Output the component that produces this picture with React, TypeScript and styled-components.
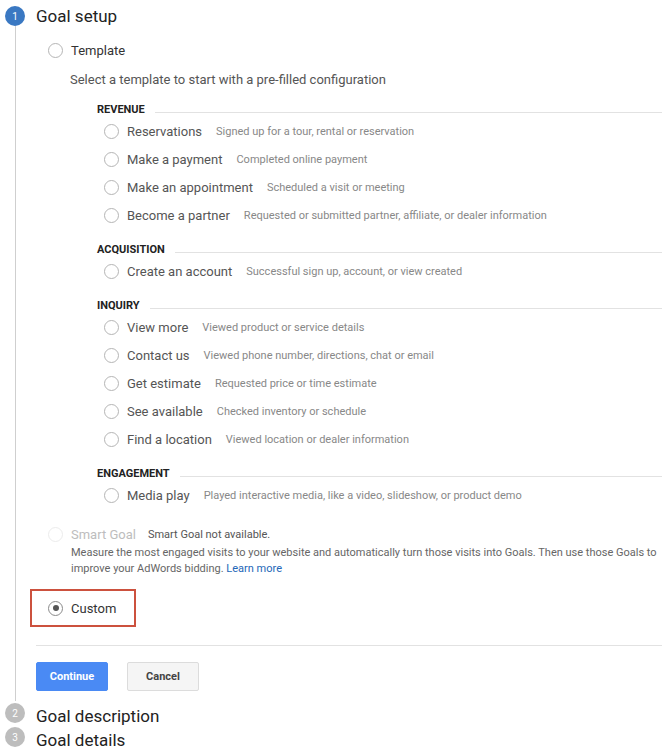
import React from "react";
import styled, { createGlobalStyle } from "styled-components";

const GlobalStyle = createGlobalStyle`
  html, body {
    margin: 0;
    padding: 0;
    background: #ffffff;
  }
  body {
    font-family: Roboto, "Noto Sans", "Liberation Sans", Arial, sans-serif;
    color: #333;
    overflow: hidden;
  }
`;

const Page = styled.div`
  width: 662px;
`;

const Step = styled.section`
  display: grid;
  grid-template-columns: 36px 1fr;
`;

const Rail = styled.div`
  width: 30px;
  display: flex;
  flex-direction: column;
  align-items: center;
`;

const StepBadge = styled.div<{ $active?: boolean; $top?: number }>`
  width: 20px;
  height: 20px;
  border-radius: 50%;
  flex-shrink: 0;
  margin-top: ${(p) => p.$top ?? 0}px;
  background: ${(p) => (p.$active ? "#3a78c2" : "#bdbdbd")};
  color: #fff;
  font-size: 10px;
  display: flex;
  align-items: center;
  justify-content: center;
`;

const RailLine = styled.div`
  flex: 1;
  width: 1px;
  background: #cfcfcf;
`;

const StepBody = styled.div`
  padding-bottom: 10px;
`;

const Heading = styled.h2<{ $h: number; $shift?: number }>`
  margin: 0;
  font-size: 17px;
  font-weight: 400;
  color: #222;
  box-sizing: border-box;
  height: ${(p) => p.$h}px;
  line-height: ${(p) => p.$h}px;
  padding-top: ${(p) => p.$shift ?? 0}px;
`;

const CollapsedStep = styled(Step)`
  height: 24px;
  align-items: center;
`;

const Radio = styled.span<{ $checked?: boolean; $disabled?: boolean }>`
  box-sizing: border-box;
  width: 15px;
  height: 15px;
  border-radius: 50%;
  flex-shrink: 0;
  border: 1px solid
    ${(p) => (p.$disabled ? "#ececec" : p.$checked ? "#8a8a8a" : "#b5b5b5")};
  display: flex;
  align-items: center;
  justify-content: center;
  &::after {
    content: "";
    width: 6px;
    height: 6px;
    border-radius: 50%;
    background: #555;
    display: ${(p) => (p.$checked ? "block" : "none")};
  }
`;

const OptionRow = styled.div<{ $h: number; $mt: number }>`
  display: flex;
  align-items: center;
  gap: 8px;
  height: ${(p) => p.$h}px;
  margin-top: ${(p) => p.$mt}px;
  padding-left: 12px;
`;

const OptionLabel = styled.span<{ $muted?: boolean }>`
  font-size: 13px;
  color: ${(p) => (p.$muted ? "#bdbdbd" : "#333")};
`;

const SmallNote = styled.span`
  font-size: 11px;
  color: #555;
  margin-left: 4px;
`;

const Hint = styled.p`
  margin: 6px 0 0 0;
  padding-left: 34px;
  font-size: 13px;
  line-height: 20px;
  color: #555;
`;

const Categories = styled.div`
  margin-top: 11px;
  padding-left: 61px;
  display: flex;
  flex-direction: column;
  gap: 12px;
`;

const CategoryHeader = styled.div`
  display: flex;
  align-items: center;
  gap: 10px;
  height: 16px;
  font-size: 11px;
  font-weight: 700;
  color: #222;
  text-transform: uppercase;
  &::after {
    content: "";
    flex: 1;
    height: 1px;
    background: #e2e2e2;
    align-self: flex-end;
    margin-bottom: 4px;
  }
`;

const TemplateRow = styled.div`
  display: flex;
  align-items: center;
  height: 28px;
  padding-left: 7px;
`;

const TemplateLabel = styled.span`
  margin-left: 8px;
  font-size: 13px;
  color: #555;
`;

const TemplateDesc = styled.span`
  margin-left: 14px;
  font-size: 11px;
  color: #888;
`;

const SmartDesc = styled.p`
  margin: 0;
  padding-left: 35px;
  font-size: 11px;
  line-height: 16px;
  color: #666;
  white-space: nowrap;
`;

const LearnMore = styled.a`
  color: #2467b8;
  text-decoration: none;
`;

const CustomBox = styled.div`
  box-sizing: border-box;
  display: flex;
  align-items: center;
  gap: 8px;
  width: fit-content;
  height: 38px;
  margin-top: 12px;
  margin-left: -6px;
  padding: 0 18px 0 16px;
  border: 2px solid #cc513e;
`;

const Divider = styled.hr`
  margin: 18px 0 0 0;
  border: none;
  height: 1px;
  background: #e2e2e2;
`;

const Actions = styled.div`
  display: flex;
  gap: 19px;
  margin-top: 16px;
`;

const Button = styled.button<{ $primary?: boolean }>`
  box-sizing: border-box;
  width: 72px;
  height: 29px;
  border-radius: 2px;
  font-family: inherit;
  font-size: 11px;
  font-weight: 700;
  cursor: pointer;
  background: ${(p) => (p.$primary ? "#4a8af4" : "#f5f5f5")};
  color: ${(p) => (p.$primary ? "#fff" : "#444")};
  border: 1px solid ${(p) => (p.$primary ? "#4a8af4" : "#dcdcdc")};
`;

type Item = { label: string; desc: string };
type Category = { name: string; items: Item[] };

const categories: Category[] = [
  {
    name: "Revenue",
    items: [
      { label: "Reservations", desc: "Signed up for a tour, rental or reservation" },
      { label: "Make a payment", desc: "Completed online payment" },
      { label: "Make an appointment", desc: "Scheduled a visit or meeting" },
      {
        label: "Become a partner",
        desc: "Requested or submitted partner, affiliate, or dealer information",
      },
    ],
  },
  {
    name: "Acquisition",
    items: [
      { label: "Create an account", desc: "Successful sign up, account, or view created" },
    ],
  },
  {
    name: "Inquiry",
    items: [
      { label: "View more", desc: "Viewed product or service details" },
      { label: "Contact us", desc: "Viewed phone number, directions, chat or email" },
      { label: "Get estimate", desc: "Requested price or time estimate" },
      { label: "See available", desc: "Checked inventory or schedule" },
      { label: "Find a location", desc: "Viewed location or dealer information" },
    ],
  },
  {
    name: "Engagement",
    items: [
      {
        label: "Media play",
        desc: "Played interactive media, like a video, slideshow, or product demo",
      },
    ],
  },
];

export default function App() {
  return (
    <Page>
      <GlobalStyle />
      <Step>
        <Rail>
          <StepBadge $active $top={6}>
            1
          </StepBadge>
          <RailLine />
        </Rail>
        <StepBody>
          <Heading $h={32}>Goal setup</Heading>

          <OptionRow $h={28} $mt={4}>
            <Radio />
            <OptionLabel>Template</OptionLabel>
          </OptionRow>
          <Hint>Select a template to start with a pre-filled configuration</Hint>

          <Categories>
            {categories.map((c) => (
              <div key={c.name}>
                <CategoryHeader>{c.name}</CategoryHeader>
                {c.items.map((it) => (
                  <TemplateRow key={it.label}>
                    <Radio />
                    <TemplateLabel>{it.label}</TemplateLabel>
                    <TemplateDesc>{it.desc}</TemplateDesc>
                  </TemplateRow>
                ))}
              </div>
            ))}
          </Categories>

          <OptionRow $h={22} $mt={14}>
            <Radio $disabled />
            <OptionLabel $muted>Smart Goal</OptionLabel>
            <SmallNote>Smart Goal not available.</SmallNote>
          </OptionRow>
          <SmartDesc>
            Measure the most engaged visits to your website and automatically turn those visits
            into Goals. Then use those Goals to
            <br />
            improve your AdWords bidding. <LearnMore href="#">Learn more</LearnMore>
          </SmartDesc>

          <CustomBox>
            <Radio $checked />
            <OptionLabel>Custom</OptionLabel>
          </CustomBox>

          <Divider />

          <Actions>
            <Button $primary>Continue</Button>
            <Button>Cancel</Button>
          </Actions>
        </StepBody>
      </Step>

      <CollapsedStep>
        <Rail>
          <StepBadge>2</StepBadge>
        </Rail>
        <Heading $h={24} $shift={3}>
          Goal description
        </Heading>
      </CollapsedStep>
      <CollapsedStep>
        <Rail>
          <StepBadge>3</StepBadge>
        </Rail>
        <Heading $h={24} $shift={3}>
          Goal details
        </Heading>
      </CollapsedStep>
    </Page>
  );
}
